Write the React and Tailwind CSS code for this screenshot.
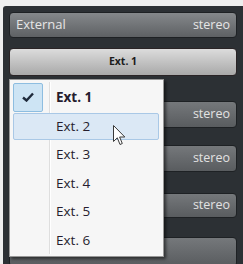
import React from "react";

const items = ["Ext. 1", "Ext. 2", "Ext. 3", "Ext. 4", "Ext. 5", "Ext. 6"];

function StereoButton({ className, label }) {
  return (
    <div
      className={
        "shrink-0 rounded-[4px] border border-[#1e2124] bg-gradient-to-b from-[#75787b] to-[#595c5f] flex items-center justify-end pr-[6px] text-[12.5px] text-[#e2e2e2] " +
        className
      }
    >
      {label}
    </div>
  );
}

export default function App() {
  return (
    <div className="relative w-[243px] h-[264px] overflow-hidden bg-[#eeeeee] pt-[6px] pl-[3px] font-['Open_Sans',sans-serif]">
      <div className="h-full bg-[#2c3034] rounded-tl-[3px] pt-[6px] px-[6px] flex flex-col">
        <div className="shrink-0 h-[26px] rounded-[4px] border border-[#1e2124] bg-gradient-to-b from-[#85888b] to-[#5e6164] flex items-center justify-between pl-[6px] pr-[6px] text-[#e6e6e6]">
          <span className="text-[13px]">External</span>
          <span className="text-[12.5px]">stereo</span>
        </div>
        <div className="shrink-0 mt-[10px] h-[28px] rounded-[4px] border border-[#2a2426] bg-gradient-to-b from-[#dcdcdc] to-[#a9a9a9] flex items-center justify-center text-[10.5px] font-bold text-[#1c1c1c]">
          Ext. 1
        </div>
        <StereoButton className="mt-[25px] h-[27px]" label="stereo" />
        <StereoButton className="mt-[17px] h-[27px]" label="stereo" />
        <StereoButton className="mt-[21px] h-[25px]" label="stereo" />
        <StereoButton className="mt-[19px] h-[30px]" label="" />
      </div>

      <div className="absolute left-[9px] top-[79px] w-[155px] h-[178px] bg-[#f6f6f6] border border-[#979797] shadow-[2px_2px_3px_rgba(0,0,0,0.55)]">
        <div className="absolute left-[39px] top-[2px] bottom-[2px] w-px bg-[#dedede]" />
        <div className="absolute left-[40px] top-[2px] bottom-[2px] w-px bg-white" />
        <div className="relative flex flex-col pt-[3px] px-[3px]">
          {items.map((t, i) => (
            <div key={t} className="relative flex h-[28.5px] items-center">
              {i === 1 && (
                <div className="absolute left-0 right-[1px] top-[1px] bottom-0 rounded-[2px] border border-[#a9c8e6] bg-[#dbe8f5]" />
              )}
              <div className="relative w-[30px] h-full flex items-center justify-center">
                {i === 0 && (
                  <div className="w-[30px] h-[29px] rounded-[2px] border border-[#8dbde0] bg-[#cde4f4] flex items-center justify-center">
                    <svg width="12" height="10" viewBox="0 0 12 10">
                      <path d="M1 5.5 L4.5 8.5 L11 1.5" fill="none" stroke="#1f2b3c" strokeWidth="2.4" strokeLinejoin="miter" />
                    </svg>
                  </div>
                )}
              </div>
              <span
                className={
                  "relative ml-[13px] text-[13.5px] text-[#261d2e] " + (i === 0 ? "font-bold" : "")
                }
              >
                {t}
              </span>
            </div>
          ))}
        </div>
      </div>

      <svg className="absolute left-[113px] top-[125px]" width="13" height="21" viewBox="0 0 13 21">
        <path
          d="M0.5 0.5 L0.5 16.5 L4.3 12.8 L7 19.5 L9.3 18.5 L6.6 12 L11.8 12 Z"
          fill="white"
          stroke="#3a3a3a"
          strokeWidth="1"
          strokeLinejoin="miter"
        />
      </svg>
    </div>
  );
}
